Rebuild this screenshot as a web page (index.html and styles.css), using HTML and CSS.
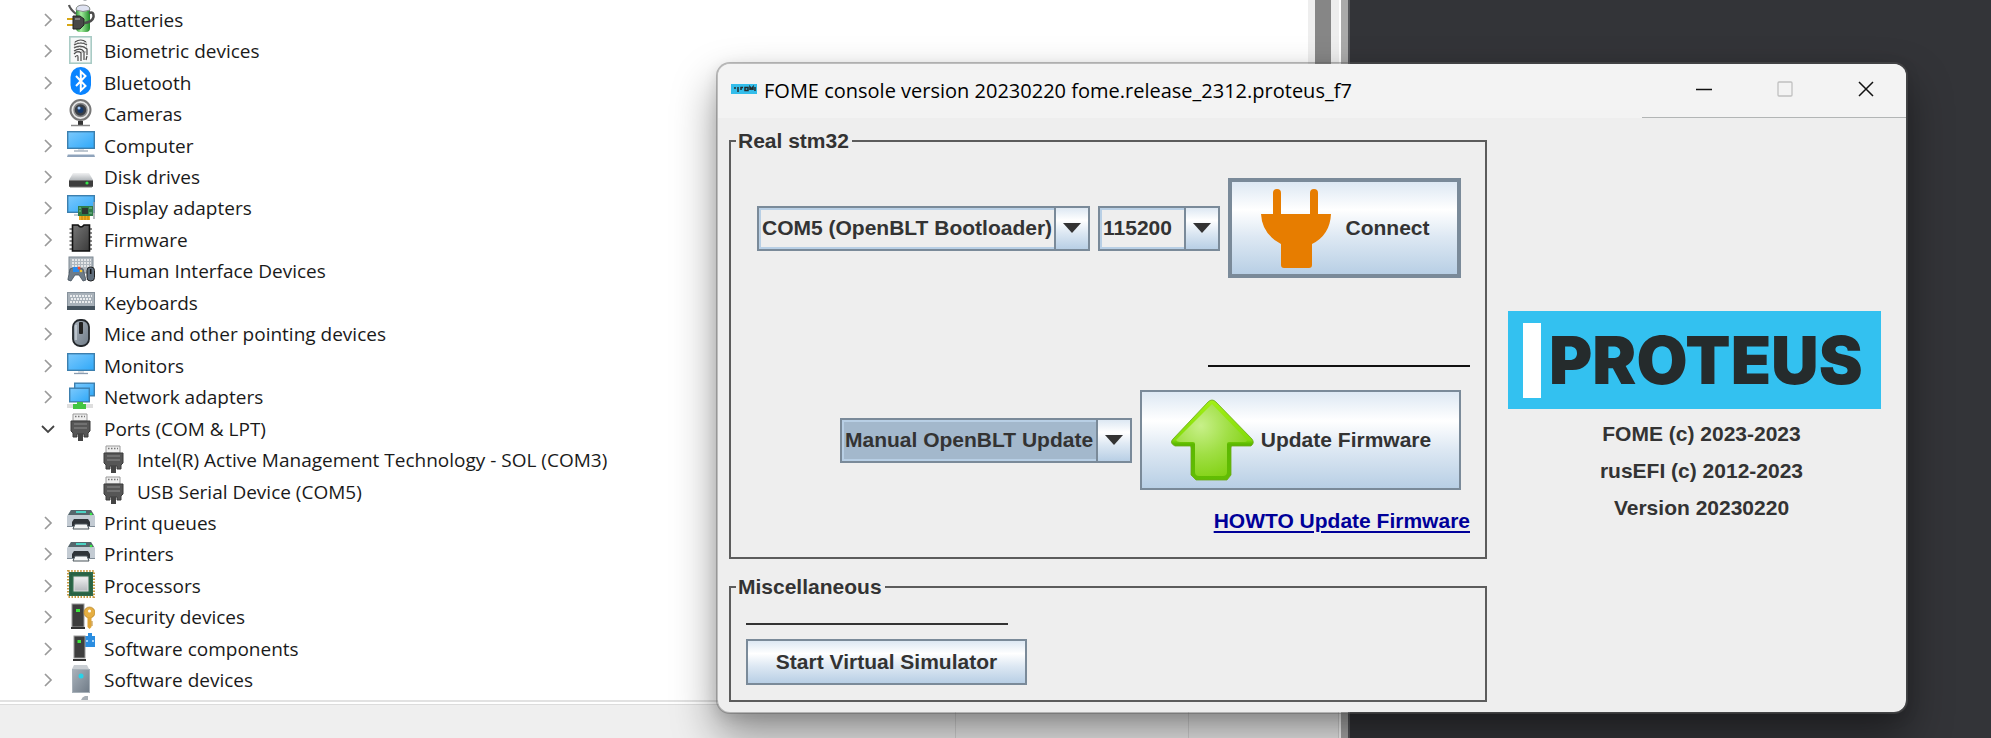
FILE: index.html
```html
<!DOCTYPE html>
<html lang="en">
<head>
<meta charset="utf-8">
<title>FOME console</title>
<link rel="stylesheet" href="styles.css">
</head>
<body>
<svg class="defs" aria-hidden="true">
  <defs>
    <linearGradient id="g-screen" x1="0" y1="0" x2="1" y2="1"><stop offset="0" stop-color="#7cc9fc"/><stop offset=".5" stop-color="#56b9fb"/><stop offset="1" stop-color="#2fa8f8"/></linearGradient>
    <linearGradient id="g-metal" x1="0" y1="0" x2="0" y2="1"><stop offset="0" stop-color="#f0f1f2"/><stop offset="1" stop-color="#b4b8bc"/></linearGradient>
    <linearGradient id="g-dark" x1="0" y1="0" x2="1" y2="1"><stop offset="0" stop-color="#777"/><stop offset="1" stop-color="#3a3a3a"/></linearGradient>
    <linearGradient id="g-steel" x1="0" y1="0" x2="1" y2="1"><stop offset="0" stop-color="#a9b2bb"/><stop offset="1" stop-color="#6f7b87"/></linearGradient>
    <linearGradient id="g-cell" x1="0" y1="0" x2="1" y2="0"><stop offset="0" stop-color="#2f8f35"/><stop offset=".35" stop-color="#a6efa0"/><stop offset="1" stop-color="#1f8a28"/></linearGradient>
    <radialGradient id="g-leaf" cx=".35" cy=".3" r=".8"><stop offset="0" stop-color="#c8f08a"/><stop offset=".5" stop-color="#a0df45"/><stop offset="1" stop-color="#7fd00f"/></radialGradient>
    <linearGradient id="g-edge" x1="0" y1="0" x2="0" y2="1"><stop offset="0" stop-color="#a2f014"/><stop offset=".5" stop-color="#83dc0c"/><stop offset=".55" stop-color="#5cb800"/><stop offset="1" stop-color="#62bd04"/></linearGradient>
  </defs>
  <symbol id="chev" viewBox="0 0 16 16"><path d="M5 2l6 6-6 6" fill="none" stroke="#9a9a9a" stroke-width="1.7"/></symbol>
  <symbol id="chev-open" viewBox="0 0 16 16"><path d="M2 5l6 6 6-6" fill="none" stroke="#444" stroke-width="1.8"/></symbol>
  <symbol id="battery" viewBox="0 0 28 28"><rect x="9" y="2" width="14" height="26" rx="4" fill="url(#g-cell)"/><path d="M9 6q0-5 7-5t7 5q-7 3-14 0" fill="#dfe3f2" stroke="#777" stroke-width=".8"/><path d="M22 9q5-2 4.500 4-1 5-9 6" fill="none" stroke="#4c4c4c" stroke-width="2.5"/><path d="M2 1q1 4 7 9" fill="none" stroke="#555" stroke-width="2.200"/><path d="M0 15h6M0 21h6" stroke="#d8a816" stroke-width="2"/><path d="M6 12h7l4 3v6l-4 4H6z" fill="#484848" stroke="#222"/><path d="M8 15h5" stroke="#999" stroke-width="1.5"/></symbol>
  <symbol id="finger" viewBox="0 0 28 28"><rect x="2.800" y=".8" width="21.400" height="26.400" fill="#f6f8f8" stroke="#a9cbc5" stroke-width="1.6"/><g fill="none" stroke="#4a4a4a" stroke-width="1.2"><path d="M8 6q6-4 11 0M7 9q7-4 13 0M7 12q7-4 13 1v6M7 15q7-4 10 1v8M7 18q4-4 7-1v8M8 21q3-3 3 0v4M20 20l-1 4"/></g><path d="M7 7h13M7 11h13M8 16h11" stroke="#777" stroke-width=".7" stroke-dasharray="2 1"/></symbol>
  <symbol id="bluetooth" viewBox="0 0 28 28"><rect x="3.500" y="0" width="20.500" height="28" rx="10" fill="#0a84ff"/><path d="M9 9l9.500 10-4.700 4.500V4.500L18.500 9 9 19" fill="none" stroke="#fff" stroke-width="2"/></symbol>
  <symbol id="camera" viewBox="0 0 28 28"><circle cx="13.500" cy="11" r="10" fill="#e8e8e8" stroke="#777" stroke-width="2"/><circle cx="13.500" cy="11" r="6.500" fill="#3a3f46" stroke="#888" stroke-width="1.500"/><circle cx="13.500" cy="11" r="3" fill="#16396b"/><circle cx="12" cy="9" r="1.500" fill="#9cc4f5"/><path d="M11 22h5v4h-5z" fill="#333"/><path d="M4 26.500h19" stroke="#888" stroke-width="1.500"/></symbol>
  <symbol id="monitor" viewBox="0 0 28 28"><rect x=".7" y="3.700" width="26.600" height="16.600" fill="url(#g-screen)" stroke="#3c7fae" stroke-width="1.400"/><path d="M11 21h6v2h-6z" fill="#d9dfe4"/><path d="M7 23.500h14" stroke="#8a9cb0" stroke-width="1.300"/></symbol>
  <symbol id="computer" viewBox="0 0 28 28"><rect x=".7" y="1.700" width="26.600" height="16.600" fill="url(#g-screen)" stroke="#3c7fae" stroke-width="1.400"/><path d="M11 19h6v1.500h-6z" fill="#d9dfe4"/><path d="M7 21h14" stroke="#9cabb9" stroke-width="1.300"/><path d="M1 24h26l1 3H0z" fill="#8fa3bb"/><path d="M1 24.500h26" stroke="#c8d3df"/></symbol>
  <symbol id="disk" viewBox="0 0 28 28"><path d="M6 12h16l4 7H2z" fill="url(#g-metal)"/><rect x="2" y="19" width="24" height="7" rx="1" fill="#3d3d3d"/><path d="M2 19.500h24M3 26h22" stroke="#777"/><circle cx="20" cy="22" r="1.600" fill="#35e84a"/></symbol>
  <symbol id="display" viewBox="0 0 28 28"><rect x=".7" y="2.700" width="26.600" height="16.600" fill="url(#g-screen)" stroke="#3c7fae" stroke-width="1.400"/><path d="M7 22h7" stroke="#8a9cb0"/><path d="M12 23h11v4H12z" fill="#f0ad20"/><path d="M15 23v4M18 23v4M21 23v4" stroke="#b87406" stroke-width=".8"/><rect x="11" y="13" width="15" height="10" fill="#2f7d49"/><rect x="15" y="15" width="6" height="6" fill="#2e3833"/><path d="M12 15h2M12 18h2M22 15h3M22 20h3" stroke="#83c598"/><path d="M27 9v17" stroke="#9aa0a5" stroke-width="1.500"/></symbol>
  <symbol id="chip" viewBox="0 0 28 28"><path d="M2.500 5h22.500M2.500 9h22.500M2.500 13h22.500M2.500 17h22.500M2.500 21h22.500M2.500 25h22.500" stroke="#666" stroke-width="1.600"/><path d="M5.500 1h5.500q3 4 6 0h5.500v26h-17z" fill="url(#g-dark)" stroke="#111" stroke-width="1.600"/></symbol>
  <symbol id="hid" viewBox="0 0 28 28"><rect x="2" y="1" width="24" height="16" fill="#aeb6bd" stroke="#7d8892"/><path d="M5 4h19M5 7h19M5 10h19" stroke="#f5f5f5" stroke-width="1.400" stroke-dasharray="2 1"/><path d="M1 23l2-10q5-3 13 0l3 11-3 1-4-6H8l-4 6-3-1z" fill="#6e7c89" stroke="#45515c" stroke-width=".8"/><path d="M6 11h6v5H6z" fill="#278cf0"/><circle cx="12" cy="12" r="1.500" fill="#f24d2c"/><circle cx="14" cy="15" r="1.300" fill="#f5c52c"/><rect x="20" y="11" width="7.500" height="14" rx="3.500" fill="#5f6d7b" stroke="#222"/><path d="M23.700 13v5" stroke="#111" stroke-width="1.500"/></symbol>
  <symbol id="keyboard" viewBox="0 0 28 28"><rect x=".5" y="5.500" width="27" height="14" fill="#a8b1b9" stroke="#87929c"/><path d="M3 9h22M4 12h21M3 15h22" stroke="#fff" stroke-width="1.700" stroke-dasharray="2 1"/><path d="M0 19h28v4H0z" fill="#44525d"/></symbol>
  <symbol id="mouse" viewBox="0 0 28 28"><rect x="6" y="1" width="16" height="26" rx="7" fill="url(#g-steel)" stroke="#23272b" stroke-width="1.800"/><rect x="12" y="3" width="4" height="12" rx="1" fill="#222"/><path d="M9 6v15" stroke="#d2d9df" stroke-width="1.300"/></symbol>
  <symbol id="network" viewBox="0 0 28 28"><rect x="7.700" y="1.200" width="19.600" height="12.600" fill="url(#g-screen)" stroke="#3c7fae" stroke-width="1.400"/><rect x="2.700" y="6.200" width="19.600" height="13.600" fill="url(#g-screen)" stroke="#3c7fae" stroke-width="1.400"/><path d="M0 22h26v4H0z" fill="#dedede"/><path d="M10 20h6v2h3v5H6v-5h4z" fill="#43c542"/></symbol>
  <symbol id="port" viewBox="0 0 28 28"><path d="M6 1h14v7H6z" fill="#eee" stroke="#999"/><path d="M8 3.500h10" stroke="#777" stroke-width="1.600" stroke-dasharray="1.500 1.500"/><path d="M4 8h19v10l-2 2v4h-4v-3H10v3H6v-4l-2-2z" fill="#565656" stroke="#3b3b3b"/><path d="M7 11h13M7 15h13" stroke="#8c8c8c" stroke-width="1.200"/><path d="M11 21h5v7h-5z" fill="#444"/></symbol>
  <symbol id="printer" viewBox="0 0 28 28"><path d="M4 3h20l4 6v11H0V9z" fill="#c3cbd3"/><path d="M4 3h20l3 5H1z" fill="#56666c"/><path d="M9 5h10" stroke="#4be0cf" stroke-width="1.800"/><circle cx="24" cy="7" r="1.300" fill="#36e646"/><path d="M0 19.500h28" stroke="#7f8b96"/><path d="M7 12h14l2 3v4H5v-4z" fill="#2e3338"/><path d="M8 17h12l2 5H6z" fill="#f3f5f6" stroke="#4b545b"/></symbol>
  <symbol id="cpu" viewBox="0 0 28 28"><rect x="1.200" y="1.200" width="25.600" height="25.600" fill="none" stroke="#c69a43" stroke-width="2.400" stroke-dasharray="1.500 1.500"/><rect x="2" y="2" width="24" height="24" fill="#2e6b4c"/><rect x="4" y="4" width="20" height="20" fill="none" stroke="#245a3e"/><rect x="7" y="7" width="14" height="14" fill="url(#g-metal)" stroke="#dedede"/></symbol>
  <symbol id="security" viewBox="0 0 28 28"><rect x="5" y="2" width="12" height="23" fill="#3e3e3e" stroke="#9a9a9a"/><path d="M4 25h14v2H4z" fill="#333"/><rect x="9" y="7" width="4" height="3" fill="#3de83d"/><circle cx="22.500" cy="10.500" r="5.500" fill="#e5ae42" stroke="#b58325" stroke-width=".7"/><circle cx="22.500" cy="9" r="1.500" fill="#fff"/><path d="M20.500 15h4v10l-2 2-2-2z" fill="#dfa435"/><path d="M25 19v5" stroke="#bd8524"/></symbol>
  <symbol id="component" viewBox="0 0 28 28"><path d="M21 0h4v3h3v11H17V3h4z" fill="#2a8de0"/><path d="M19 8h2M25 8h2" stroke="#a6d4fb" stroke-width="2"/><rect x="7" y="3" width="11" height="22" fill="#3e3e3e" stroke="#9a9a9a"/><path d="M6 26h13v2H6z" fill="#333"/><rect x="10.500" y="7" width="3.500" height="3" fill="#3de83d"/></symbol>
  <symbol id="device" viewBox="0 0 28 28"><path d="M7 0h13l2 4H5z" fill="#c9ced3"/><rect x="5.500" y="4.500" width="17" height="23" fill="url(#g-steel)" stroke="#a8b1b9"/><circle cx="14" cy="11" r="2.500" fill="#28d3e8"/></symbol>
</svg>

<div class="desktop">
  <section class="manager" aria-label="Device Manager">
    <div class="pane">
      <div class="tree">
        <div class="clip clip-top"><svg viewBox="0 0 28 4"><path d="M16 0h4l-1 1h-2z" fill="#b3b6b9"/></svg></div>
        <ul class="rows">
          <li class="row"><svg class="chev"><use href="#chev"/></svg><svg class="icon"><use href="#battery"/></svg><span>Batteries</span></li>
          <li class="row"><svg class="chev"><use href="#chev"/></svg><svg class="icon"><use href="#finger"/></svg><span>Biometric devices</span></li>
          <li class="row"><svg class="chev"><use href="#chev"/></svg><svg class="icon"><use href="#bluetooth"/></svg><span>Bluetooth</span></li>
          <li class="row"><svg class="chev"><use href="#chev"/></svg><svg class="icon"><use href="#camera"/></svg><span>Cameras</span></li>
          <li class="row"><svg class="chev"><use href="#chev"/></svg><svg class="icon"><use href="#computer"/></svg><span>Computer</span></li>
          <li class="row"><svg class="chev"><use href="#chev"/></svg><svg class="icon"><use href="#disk"/></svg><span>Disk drives</span></li>
          <li class="row"><svg class="chev"><use href="#chev"/></svg><svg class="icon"><use href="#display"/></svg><span>Display adapters</span></li>
          <li class="row"><svg class="chev"><use href="#chev"/></svg><svg class="icon"><use href="#chip"/></svg><span>Firmware</span></li>
          <li class="row"><svg class="chev"><use href="#chev"/></svg><svg class="icon"><use href="#hid"/></svg><span>Human Interface Devices</span></li>
          <li class="row"><svg class="chev"><use href="#chev"/></svg><svg class="icon"><use href="#keyboard"/></svg><span>Keyboards</span></li>
          <li class="row"><svg class="chev"><use href="#chev"/></svg><svg class="icon"><use href="#mouse"/></svg><span>Mice and other pointing devices</span></li>
          <li class="row"><svg class="chev"><use href="#chev"/></svg><svg class="icon"><use href="#monitor"/></svg><span>Monitors</span></li>
          <li class="row"><svg class="chev"><use href="#chev"/></svg><svg class="icon"><use href="#network"/></svg><span>Network adapters</span></li>
          <li class="row"><svg class="chev"><use href="#chev-open"/></svg><svg class="icon"><use href="#port"/></svg><span>Ports (COM &amp; LPT)</span></li>
          <li class="row child"><svg class="icon"><use href="#port"/></svg><span>Intel(R) Active Management Technology - SOL (COM3)</span></li>
          <li class="row child"><svg class="icon"><use href="#port"/></svg><span>USB Serial Device (COM5)</span></li>
          <li class="row"><svg class="chev"><use href="#chev"/></svg><svg class="icon"><use href="#printer"/></svg><span>Print queues</span></li>
          <li class="row"><svg class="chev"><use href="#chev"/></svg><svg class="icon"><use href="#printer"/></svg><span>Printers</span></li>
          <li class="row"><svg class="chev"><use href="#chev"/></svg><svg class="icon"><use href="#cpu"/></svg><span>Processors</span></li>
          <li class="row"><svg class="chev"><use href="#chev"/></svg><svg class="icon"><use href="#security"/></svg><span>Security devices</span></li>
          <li class="row"><svg class="chev"><use href="#chev"/></svg><svg class="icon"><use href="#component"/></svg><span>Software components</span></li>
          <li class="row"><svg class="chev"><use href="#chev"/></svg><svg class="icon"><use href="#device"/></svg><span>Software devices</span></li>
        </ul>
        <div class="clip"><svg viewBox="0 0 28 4"><path d="M14 4q1-3 4-4h3v4z" fill="#a9b0b7"/></svg></div>
      </div>
      <div class="track"><div class="thumb"></div></div>
    </div>
    <div class="status"><span class="cell"></span><span class="cell"></span><span class="cell"></span></div>
  </section>

  <main class="console">
    <header class="titlebar">
      <svg class="appicon" viewBox="0 0 26 10"><path d="M0 0h26v10H0z" fill="#33bdea"/><path d="M3 4h2M7 3v5M10 6V3.500h2M14 3.500h3v3h-3zM19 6V3l1.500 2L22 3v3M24 3v4" fill="none" stroke="#252b2c" stroke-width="1.500"/></svg>
      <h1 class="title">FOME console version 20230220 fome.release_2312.proteus_f7</h1>
      <div class="controls">
        <button class="ctl" aria-label="Minimize"><svg viewBox="0 0 16 16"><path d="M0 8.500h16" stroke="#111" stroke-width="1.300"/></svg></button>
        <button class="ctl" aria-label="Maximize" disabled><svg viewBox="0 0 16 16"><rect x="1" y="1" width="14" height="14" rx="1" fill="none" stroke="#c0c0c0" stroke-width="1.300"/></svg></button>
        <button class="ctl" aria-label="Close"><svg viewBox="0 0 16 16"><path d="M1 1l14 14M15 1L1 15" stroke="#111" stroke-width="1.500"/></svg></button>
      </div>
    </header>
    <div class="body">
      <div class="panels">
        <fieldset class="group stm">
          <legend>Real stm32</legend>
          <div class="line">
            <div class="combo port-combo"><select aria-label="Port"><option>COM5 (OpenBLT Bootloader)</option></select><span class="drop"><svg viewBox="0 0 18 10"><path d="M0 0h18L9 10z" fill="#333"/></svg></span></div>
            <div class="combo baud-combo"><select aria-label="Baud rate"><option>115200</option></select><span class="drop"><svg viewBox="0 0 18 10"><path d="M0 0h18L9 10z" fill="#333"/></svg></span></div>
            <button class="btn big default"><svg class="plug" viewBox="0 0 72 80"><path d="M1 26h12V5a4 4 0 0 1 8 0v21h29V5a4 4 0 0 1 8 0v21h13q-1 21-19 30v21q0 3-3 3H24q-3 0-3-3V56Q2 46 1 26z" fill="#e77d00"/></svg>Connect</button>
          </div>
          <hr class="rule">
          <div class="line">
            <div class="combo mode-combo focused"><select aria-label="Update mode"><option>Manual OpenBLT Update</option></select><span class="drop"><svg viewBox="0 0 18 10"><path d="M0 0h18L9 10z" fill="#333"/></svg></span></div>
            <button class="btn big update"><svg class="arrow" viewBox="0 0 84 84"><path d="M42 2q2 0 4 2l36 37q3 4-1 7h-19q-1 0-1 2v27l-4 5H26l-5-5V50q0-2-1-2H5q-6-3-2-7L38 4q2-2 4-2z" fill="url(#g-edge)" stroke="#69a816" stroke-width=".8"/><path d="M42 6L6 42q1 2 4 2h13q2 0 2 2v28q0 4 4 4h24q4 0 4-4V46q0-2 2-2h15q3 0 3-2z" fill="url(#g-leaf)"/></svg>Update Firmware</button>
          </div>
          <a class="howto" href="#howto">HOWTO Update Firmware</a>
        </fieldset>
        <fieldset class="group misc">
          <legend>Miscellaneous</legend>
          <hr class="rule">
          <button class="btn sim">Start Virtual Simulator</button>
        </fieldset>
      </div>
      <aside class="about">
        <div class="logo"><span class="bar"></span><span class="word">PROTEUS</span></div>
        <div class="credits"><p>FOME (c) 2023-2023</p><p>rusEFI (c) 2012-2023</p><p>Version 20230220</p></div>
      </aside>
    </div>
  </main>
</div>
</body>
</html>
```
FILE: styles.css
```css
* { box-sizing: border-box; }
body { margin: 0; font-family: "Open Sans", "Noto Sans", sans-serif; font-size: 19px; color: #1a1a1a; }
.defs { position: absolute; width: 0; height: 0; }
.desktop { position: relative; display: grid; grid-template-columns: minmax(0, 1fr) 641px; grid-template-rows: minmax(0, 1fr); height: 100vh; overflow: hidden; background: #333438; }

.manager { display: flex; flex-direction: column; min-height: 0; background: #efefef; border-right: 2px solid #55565a; box-shadow: inset -7px 0 #aaa, inset -9px 0 #fff; }
.pane { flex: 1; display: flex; min-height: 0; margin-right: 9px; border-bottom: 2px solid #e2e2e2; }
.tree { flex: 1; display: flex; flex-direction: column; min-height: 0; background: #fff; }
.rows { flex: 1; display: flex; flex-direction: column; min-height: 0; margin: 0; padding: 0; list-style: none; }
.row { flex: 1; display: flex; align-items: center; min-height: 0; padding-left: 40px; white-space: nowrap; line-height: 28px; }
.row.child { padding-left: 100px; }
.chev { width: 16px; height: 16px; margin-right: 11px; }
.icon { width: 28px; height: 28px; margin: 0 9px 3px 0; }
.clip { display: flex; flex: none; height: 4px; padding-left: 67px; }
.clip svg { width: 28px; height: 4px; }
.track { width: 31px; padding: 0 8px 0 7px; background: #eee; }
.thumb { height: 100%; background: #868686; }
.status { display: flex; height: 36px; margin-right: 9px; border-top: 2px solid #fff; box-shadow: inset 0 1px #dcdcdc; }
.cell { flex: 0 0 233px; border-right: 1px solid #d8d8d8; }
.cell:first-child { flex: 1; }
.cell:last-child { flex: 0 0 150px; }

.console { position: absolute; inset: 62px 83px 24px 716px; display: flex; flex-direction: column; background: #eee; border: 2px solid rgba(90, 90, 90, .4); background-clip: padding-box; border-radius: 14px; overflow: hidden; box-shadow: 0 22px 44px rgba(0, 0, 0, .4), 0 4px 14px rgba(0, 0, 0, .1); }
.titlebar { display: flex; align-items: center; height: 54px; padding-left: 13px; background: #f3f3f3; }
.appicon { width: 26px; height: 10px; margin: 0 7px 4px 0; }
.title { flex: 1; margin: 0; font-size: 20px; font-weight: 400; line-height: 28px; color: #000; white-space: nowrap; }
.controls { display: flex; justify-content: flex-end; width: 264px; height: 54px; border-bottom: 1px solid #b2b5b5; }
.ctl { width: 81px; padding: 0 0 3px; border: 0; background: none; }
.ctl svg { display: block; width: 16px; height: 16px; margin: 0 auto; }

.body { flex: 1; display: grid; grid-template-columns: minmax(0, 1fr) 419px; min-height: 0; padding: 9px 0 10px 11px; font-family: "Liberation Sans", Arial, sans-serif; font-size: 21px; font-weight: 700; line-height: 28px; color: #333; }
.panels { display: flex; flex-direction: column; gap: 14px; min-height: 0; }
.group { display: flex; flex-direction: column; min-width: 0; margin: 0; padding: 0 15px; border: 2px solid #5c5c5c; }
.group legend { margin-left: -10px; padding: 0 3px 0 2px; }
.rule { width: 262px; height: 2px; margin: 0; border: 0; background: #111; }
.stm { flex: 1; align-items: flex-end; padding-top: 23px; }
.stm .rule { margin: 87px 0 23px; }
.misc { align-items: flex-start; padding-top: 22px; padding-bottom: 15px; }
.misc .rule { margin-bottom: 14px; background: #333; }
.line { display: flex; align-items: center; gap: 8px; margin-right: 9px; }

.combo { display: grid; grid-template-columns: 1fr 36px; height: 45px; border: 2px solid #7a8a99; }
.combo select { grid-area: 1 / 1 / 2 / 3; width: 100%; height: 100%; padding: 0 0 0 1px; border: 2px solid #b8cfe5; border-radius: 0; background: #eee; appearance: none; font: inherit; color: #333; }
.combo.focused select { background: #a3b8cc; }
.drop { grid-area: 1 / 2; display: flex; align-items: center; justify-content: center; border-left: 2px solid #7a8a99; background: linear-gradient(#dde8f3, #fff 30%, #dde8f3 60%, #b8cfe5); pointer-events: none; }
.drop svg { width: 18px; height: 10px; }
.port-combo { width: 333px; }
.baud-combo { width: 122px; }
.baud-combo, .port-combo { grid-template-columns: 1fr 34px; }
.mode-combo { width: 292px; grid-template-columns: 1fr 34px; }

.btn { display: flex; align-items: center; justify-content: center; padding: 0; border: 2px solid #7a8a99; background: linear-gradient(#dde8f3, #fff 30%, #dde8f3 60%, #b8cfe5); font: inherit; color: #333; white-space: nowrap; }
.big { height: 100px; }
.default { width: 233px; border-width: 4px; }
.update { width: 321px; }
.sim { width: 281px; height: 46px; }
.plug { width: 72px; height: 80px; margin-right: 14px; }
.arrow { width: 84px; height: 84px; margin-right: 7px; }
.howto { margin-top: 17px; color: #000099; text-underline-offset: 3px; }

.about { display: flex; flex-direction: column; gap: 6px; padding: 184px 25px 0 21px; }
.logo { display: flex; align-items: center; height: 98px; padding-left: 15px; background: #33c1f0; }
.bar { width: 18px; height: 75px; margin-right: 8px; background: #fff; }
.word { font-family: Inter, "Open Sans", sans-serif; font-size: 66px; font-weight: 900; line-height: 75px; color: #252b2c; }
.credits { padding-left: 14px; text-align: center; }
.credits p { margin: 0; line-height: 37px; }
```
